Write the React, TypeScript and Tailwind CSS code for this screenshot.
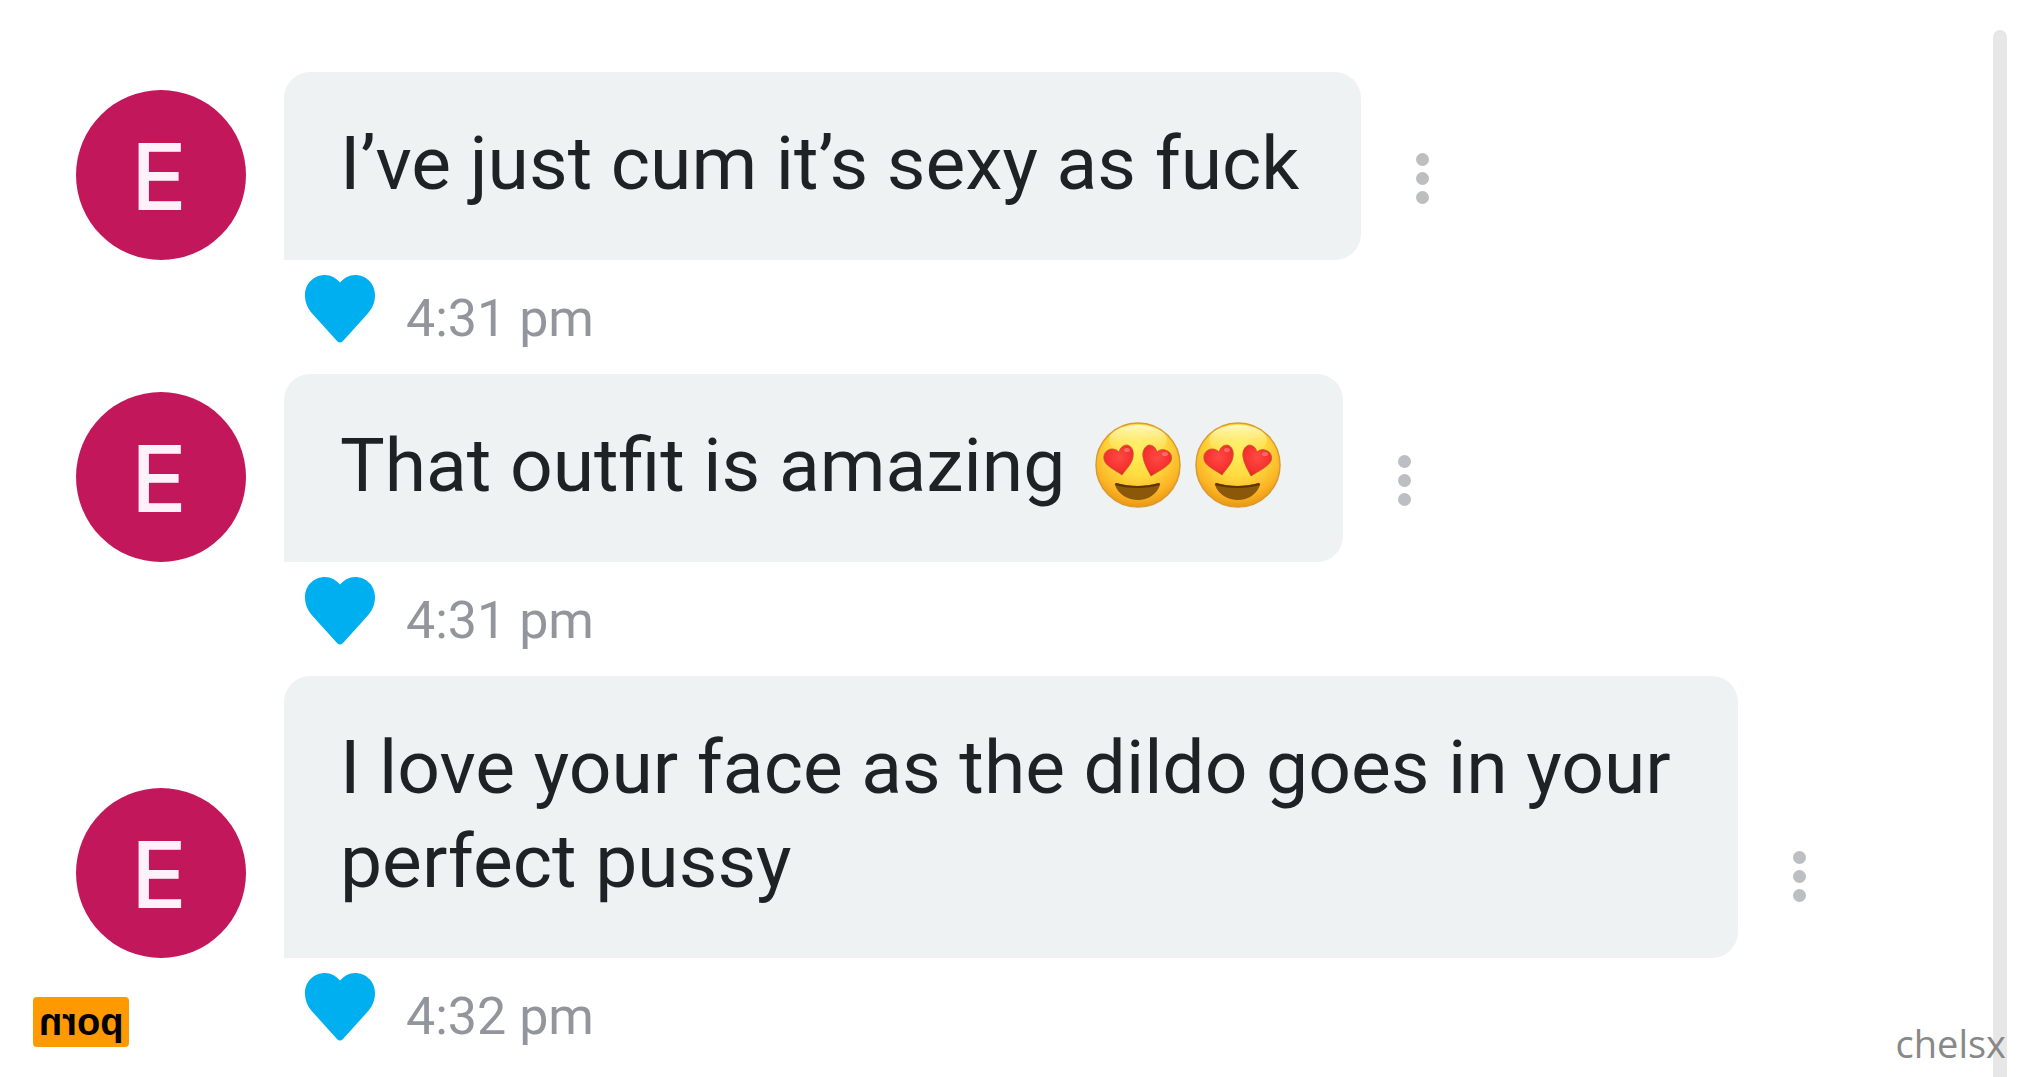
interface Message {
  id: number;
  text: string;
  emojis?: number;
  time: string;
}

const MESSAGES: Message[] = [
  { id: 1, text: 'I’ve just cum it’s sexy as fuck', time: '4:31 pm' },
  { id: 2, text: 'That outfit is amazing', emojis: 2, time: '4:31 pm' },
  { id: 3, text: 'I love your face as the dildo goes in your perfect pussy', time: '4:32 pm' },
];

function HeartIcon() {
  return (
    <svg viewBox="0 0 70 68" className="h-[68px] w-[70px]" fill="#00aff0" aria-hidden="true">
      <path d="M35 7.500C31 3 26 0 20 0 9 0 0 8.500 0 20c0 8 3 14 8.500 20L32 66c2 2 4 2 6 0l23.500-26C67 34 70 28 70 20 70 8.500 61 0 50 0 44 0 39 3 35 7.500Z" />
    </svg>
  );
}

// Shared fills for every heart-eyes face
function EmojiDefs() {
  return (
    <svg width="0" height="0" className="absolute" aria-hidden="true">
      <defs>
        <radialGradient id="face" cx="50%" cy="32%" r="70%">
          <stop offset="0" stopColor="#fff05a" />
          <stop offset="0.45" stopColor="#ffdb40" />
          <stop offset="0.78" stopColor="#fbb425" />
          <stop offset="1" stopColor="#e8930f" />
        </radialGradient>
        <linearGradient id="shine" x1="0" y1="0" x2="0" y2="1">
          <stop offset="0" stopColor="#fffbd0" stopOpacity="0.9" />
          <stop offset="1" stopColor="#ffef70" stopOpacity="0" />
        </linearGradient>
        <radialGradient id="eye" cx="50%" cy="40%" r="65%">
          <stop offset="0" stopColor="#ff4a44" />
          <stop offset="0.7" stopColor="#f5302f" />
          <stop offset="1" stopColor="#d02a20" />
        </radialGradient>
      </defs>
    </svg>
  );
}

function HeartEyes() {
  return (
    <svg viewBox="0 0 86 86" className="h-[86px] w-[86px]" role="img" aria-label="Heart eyes">
      <circle cx="43" cy="43" r="42" fill="url(#face)" stroke="#d99a30" strokeWidth="1.500" />
      <ellipse cx="43" cy="18" rx="29" ry="15" fill="url(#shine)" />
      <g fill="url(#eye)" stroke="#c9542a" strokeWidth="0.8">
        <path d="M27 53C22 49 12 45 9.500 39 7 32 12 27 17 27c3 0 5 1 7 3 1-4 4-7 8-7 5 1 7 6 6 12-1 7-7 12-11 18Z" />
        <path d="M56 54c-3-6-7-12-8-19-1-6 2-11 6-12 4 0 7 3 8 7 2-2 5-3 8-2 5 1 8 6 6 11-3 6-14 11-20 15Z" />
      </g>
      <g fill="#ff8a8a" opacity="0.6">
        <ellipse cx="32" cy="28" rx="3" ry="2" />
        <ellipse cx="70" cy="32" rx="3" ry="2" />
      </g>
      <path d="M21 61c14 4 29 4 43 0 1 0 1.500 1 1 2-3 9-12 15-22 15S23 72 20 63c-.500-1 0-2 1-2Z" fill="#8a5808" />
      <path d="M21 61c14 4 29 4 43 0l1 2c-14 4-31 4-45 0Z" fill="#5b3400" />
    </svg>
  );
}

function MessageRow({ message }: { message: Message }) {
  return (
    <li>
      <div className="flex items-end">
        <div className="mr-[38px] flex size-[170px] shrink-0 items-center justify-center rounded-full bg-[#c2185b] pt-1 pr-1 font-[Inter,sans-serif] text-[92px] leading-none font-medium text-[#fff0fa]">
          E
        </div>
        <div className="flex max-w-[1454px] items-center rounded-[26px] rounded-bl-none bg-[#eef2f3] pt-11 pr-[62px] pb-[50px] pl-14 text-[75px] leading-[94px] text-[#1e2224]">
          <p>{message.text}</p>
          {message.emojis && (
            <span className="ml-[30px] flex gap-[14px]">
              {Array.from({ length: message.emojis }, (_, i) => (
                <HeartEyes key={i} />
              ))}
            </span>
          )}
        </div>
        <button
          type="button"
          aria-label="Message options"
          className="ml-[55px] flex h-[164px] shrink-0 flex-col items-center justify-center gap-[6px]"
        >
          <span className="size-[13px] rounded-full bg-[#bdbec2]" />
          <span className="size-[13px] rounded-full bg-[#bdbec2]" />
          <span className="size-[13px] rounded-full bg-[#bdbec2]" />
        </button>
      </div>
      <div className="ml-[229px] flex h-[114px] items-start pt-[15px]">
        <button type="button" aria-label="Unlike message">
          <HeartIcon />
        </button>
        <time className="ml-[31px] pt-[14px] text-[52px] leading-[60px] text-[#92969c]">{message.time}</time>
      </div>
    </li>
  );
}

export default function App() {
  return (
    <main className="relative flex h-screen overflow-hidden bg-white font-[Roboto,sans-serif]">
      <EmojiDefs />
      <ul className="min-w-0 flex-1 pt-[72px] pl-[76px]">
        {MESSAGES.map((m) => (
          <MessageRow key={m.id} message={m} />
        ))}
      </ul>

      {/* Scrollbar */}
      <div className="mt-[30px] mr-[14px] w-[14px] shrink-0 rounded-t-full bg-[#e7e7e7]" />

      {/* Corner labels */}
      <div className="absolute bottom-[30px] left-[33px] flex h-[50px] w-24 items-center justify-center rounded bg-[#ff9900] font-['Liberation_Sans',sans-serif] text-[38px] leading-none font-bold text-black">
        <span className="-scale-x-100">porn</span>
      </div>
      <span className="absolute right-[15px] bottom-[10px] font-['Open_Sans',sans-serif] text-[38px] leading-[48px] text-[#888888]">
        chelsx
      </span>
    </main>
  );
}
